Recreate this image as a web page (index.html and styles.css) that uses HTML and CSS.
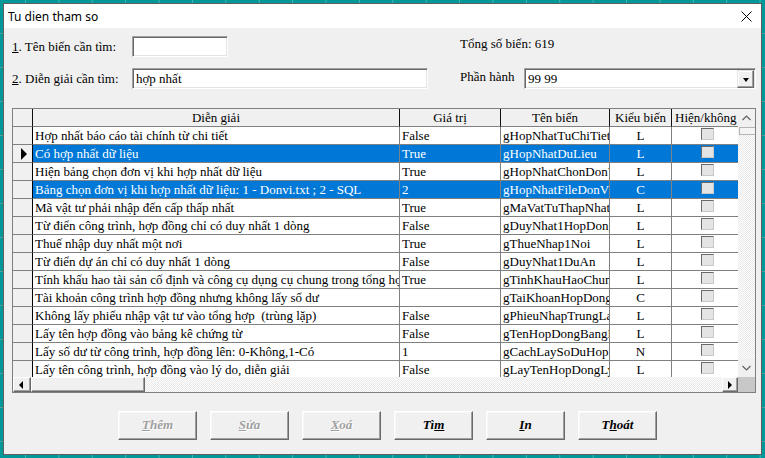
FILE: index.html
```html
<!DOCTYPE html>
<html lang="vi">
<head>
<meta charset="utf-8">
<title>Tu dien tham so</title>
<link rel="stylesheet" href="styles.css">
</head>
<body>
<div class="window">
  <div class="titlebar">
    <span class="title">Tu dien tham so</span>
    <svg class="close" width="11" height="11" viewBox="0 0 11 11"><path d="M0.5 0.5 L10.5 10.5 M10.5 0.5 L0.5 10.5" stroke="#000" stroke-width="1" fill="none"/></svg>
  </div>
  <div class="content">
    <div class="form">
      <div class="lbl"><u>1</u>. Tên biến cần tìm:</div>
      <div class="input in1"></div>
      <div class="total">Tổng số biến: 619</div>
      <div class="lbl"><u>2</u>. Diễn giải cần tìm:</div>
      <div class="input in2">hợp nhất</div>
      <div class="lbl ph">Phần hành</div>
      <div class="input combo"><span>99 99</span><span class="dd"><i class="tri-down"></i></span></div>
    </div>

    <div class="grid">
      <div class="gmain">
        <div class="cells">
          <div class="row hdr">
            <div class="c ind"></div>
            <div class="c">Diễn giải</div>
            <div class="c">Giá trị</div>
            <div class="c">Tên biến</div>
            <div class="c">Kiểu biến</div>
            <div class="c left">Hiện/không hiện</div>
          </div>
          <div class="row">
            <div class="c ind"></div><div class="c">Hợp nhất báo cáo tài chính từ chi tiết</div><div class="c">False</div><div class="c">gHopNhatTuChiTiet</div><div class="c k">L</div><div class="c h"><span class="cb"></span></div>
          </div>
          <div class="row sel">
            <div class="c ind"><i class="tri-right"></i></div><div class="c">Có hợp nhất dữ liệu</div><div class="c">True</div><div class="c">gHopNhatDuLieu</div><div class="c k">L</div><div class="c h"><span class="cb"></span></div>
          </div>
          <div class="row">
            <div class="c ind"></div><div class="c">Hiện bảng chọn đơn vị khi hợp nhất dữ liệu</div><div class="c">True</div><div class="c">gHopNhatChonDonVi</div><div class="c k">L</div><div class="c h"><span class="cb"></span></div>
          </div>
          <div class="row sel">
            <div class="c ind"></div><div class="c">Bảng chọn đơn vị khi hợp nhất dữ liệu: 1 - Donvi.txt ; 2 - SQL</div><div class="c">2</div><div class="c">gHopNhatFileDonVi</div><div class="c k">C</div><div class="c h"><span class="cb"></span></div>
          </div>
          <div class="row">
            <div class="c ind"></div><div class="c">Mã vật tư phải nhập đến cấp thấp nhất</div><div class="c">True</div><div class="c">gMaVatTuThapNhat</div><div class="c k">L</div><div class="c h"><span class="cb"></span></div>
          </div>
          <div class="row">
            <div class="c ind"></div><div class="c">Từ điển công trình, hợp đồng chỉ có duy nhất 1 dòng</div><div class="c">False</div><div class="c">gDuyNhat1HopDong</div><div class="c k">L</div><div class="c h"><span class="cb"></span></div>
          </div>
          <div class="row">
            <div class="c ind"></div><div class="c">Thuế nhập duy nhất một nơi</div><div class="c">True</div><div class="c">gThueNhap1Noi</div><div class="c k">L</div><div class="c h"><span class="cb"></span></div>
          </div>
          <div class="row">
            <div class="c ind"></div><div class="c">Từ điển dự án chỉ có duy nhất 1 dòng</div><div class="c">False</div><div class="c">gDuyNhat1DuAn</div><div class="c k">L</div><div class="c h"><span class="cb"></span></div>
          </div>
          <div class="row">
            <div class="c ind"></div><div class="c">Tính khấu hao tài sản cố định và công cụ dụng cụ chung trong tổng hợp</div><div class="c">True</div><div class="c">gTinhKhauHaoChung</div><div class="c k">L</div><div class="c h"><span class="cb"></span></div>
          </div>
          <div class="row">
            <div class="c ind"></div><div class="c">Tài khoản công trình hợp đồng nhưng không lấy số dư</div><div class="c"></div><div class="c">gTaiKhoanHopDong</div><div class="c k">C</div><div class="c h"><span class="cb"></span></div>
          </div>
          <div class="row">
            <div class="c ind"></div><div class="c">Không lấy phiếu nhập vật tư vào tổng hợp  (trùng lặp)</div><div class="c">False</div><div class="c">gPhieuNhapTrungLap</div><div class="c k">L</div><div class="c h"><span class="cb"></span></div>
          </div>
          <div class="row">
            <div class="c ind"></div><div class="c">Lấy tên hợp đồng vào bảng kê chứng từ</div><div class="c">False</div><div class="c">gTenHopDongBangKe</div><div class="c k">L</div><div class="c h"><span class="cb"></span></div>
          </div>
          <div class="row">
            <div class="c ind"></div><div class="c">Lấy số dư từ công trình, hợp đồng lên: 0-Không,1-Có</div><div class="c">1</div><div class="c">gCachLaySoDuHopDong</div><div class="c k">N</div><div class="c h"><span class="cb"></span></div>
          </div>
          <div class="row">
            <div class="c ind"></div><div class="c">Lấy tên công trình, hợp đồng vào lý do, diễn giải</div><div class="c">False</div><div class="c">gLayTenHopDongLyDo</div><div class="c k">L</div><div class="c h"><span class="cb"></span></div>
          </div>
        </div>
        <div class="vscroll">
          <div class="vend"><svg width="9" height="6" viewBox="0 0 9 6"><path d="M0.5 5 L4.5 1 L8.5 5" stroke="#606060" stroke-width="1.2" fill="none"/></svg></div>
          <div class="vthumb"></div>
          <div class="vtrack"></div>
          <div class="vend"><svg width="9" height="6" viewBox="0 0 9 6"><path d="M0.5 1 L4.5 5 L8.5 1" stroke="#606060" stroke-width="1.2" fill="none"/></svg></div>
        </div>
      </div>
      <div class="hscroll">
        <div class="raised hbtn lb"><i class="tri-left"></i></div>
        <div class="raised hthumb"></div>
        <div class="htrack"></div>
        <div class="raised hbtn rb"><i class="tri-right"></i></div>
        <div class="corner"></div>
      </div>
    </div>

    <div class="buttons">
      <div class="btn dis"><u>T</u>hêm</div>
      <div class="btn dis"><u>S</u>ửa</div>
      <div class="btn dis"><u>X</u>oá</div>
      <div class="btn">Tì<u>m</u></div>
      <div class="btn"><u>I</u>n</div>
      <div class="btn">T<u>h</u>oát</div>
    </div>
  </div>
</div>
</body>
</html>
```
FILE: styles.css
```css
* { box-sizing: border-box; }
html, body { margin: 0; padding: 0; }
body {
  width: 765px;
  height: 458px;
  overflow: hidden;
  padding: 3px 3px 0 3px;
  background-color: #009898;
  background-image:
    linear-gradient(90deg, rgba(150, 220, 220, 0.45) 1px, transparent 1px),
    linear-gradient(rgba(200, 160, 170, 0.45) 1px, transparent 1px);
  background-size: 33.4px 100%, 100% 34px;
  background-position: 25px 0, 0 33px;
}

.window {
  width: 759px;
  height: 452px;
  border: 1px solid #5e5e5e;
  background: #f0f0f0;
  display: flex;
  flex-direction: column;
}

.titlebar {
  height: 24px;
  background: #fff;
  display: flex;
  align-items: center;
  justify-content: space-between;
  padding: 0 9px 0 4px;
  font: 12px "Noto Sans", "DejaVu Sans", sans-serif;
  color: #000;
}
.close { display: block; }

.content {
  padding: 8px 0 0 8px;
  font: 13px "Liberation Serif", serif;
  color: #000;
}

.form {
  display: grid;
  grid-template-columns: 120px 296px 32px 64px 232px;
  grid-template-rows: 21px 21px;
  row-gap: 11px;
}
.lbl { align-self: center; line-height: 15px; white-space: nowrap; }
.lbl.ph { grid-column: 4; align-self: start; padding-top: 1px; }
.total { grid-column: 4 / 6; align-self: start; line-height: 15px; }

.input {
  height: 21px;
  background: #fff;
  border: 1px solid;
  border-color: #a0a0a0 #fff #fff #a0a0a0;
  box-shadow: inset 1px 1px #696969, inset -1px -1px #e3e3e3;
  padding: 2px 0 0 3px;
  line-height: 15px;
  white-space: nowrap;
}
.in1 { width: 96px; }
.in2 { width: 296px; }
.combo {
  grid-column: 5;
  width: 232px;
  display: flex;
  justify-content: space-between;
  padding-right: 1px;
}
.dd {
  width: 17px;
  height: 18px;
  margin-top: -1px;
  background: #f0f0f0;
  border: 1px solid;
  border-color: #e3e3e3 #696969 #696969 #e3e3e3;
  box-shadow: inset -1px -1px #a0a0a0, inset 1px 1px #fff;
  display: flex;
  align-items: center;
  justify-content: center;
}
.tri-down {
  display: block;
  width: 0; height: 0;
  border-top: 4px solid #000;
  border-left: 3.5px solid transparent;
  border-right: 3.5px solid transparent;
  margin-top: 1px;
}

/* data grid */
.grid {
  margin-top: 19px;
  width: 744px;
  border: 1px solid #7f7f7f;
  background: #fff;
}
.gmain { display: flex; height: 268px; }
.cells { width: 725px; height: 268px; overflow: hidden; background: #fff; }
.row {
  display: grid;
  grid-template-columns: 20px 367px 101px 109px 62px 66px;
  height: 18px;
}
.c {
  border-right: 1px solid #808080;
  border-bottom: 1px solid #808080;
  overflow: hidden;
  white-space: pre;
  padding: 0 2px;
  line-height: 17px;
}
.c:last-child { border-right: none; }
.c.ind {
  background: #f0f0f0;
  border-right-color: #000;
  padding: 3px 0 0 8px;
}
.c.k { text-align: center; }
.c.h { padding: 0; }
.hdr .c {
  background: #f0f0f0;
  text-align: center;
  border-right-color: #101010;
}
.hdr .c.left { text-align: left; padding-left: 3px; }
.sel .c:not(.ind) { background: #0078d7; color: #fff; }

.cb {
  display: block;
  width: 13px;
  height: 12px;
  margin: 1px 0 0 29px;
  background: #e4e4e4;
  border: 1px solid;
  border-color: #6a6a6a #c8c8c8 #c8c8c8 #6a6a6a;
}

.tri-right {
  display: block;
  width: 0; height: 0;
  border-left: 6px solid #000;
  border-top: 6px solid transparent;
  border-bottom: 6px solid transparent;
}
.tri-left {
  display: block;
  width: 0; height: 0;
  border-right: 4px solid #000;
  border-top: 4px solid transparent;
  border-bottom: 4px solid transparent;
}

.vscroll {
  width: 17px;
  display: flex;
  flex-direction: column;
  background: #f0f0f0;
}
.vend {
  height: 18px;
  display: flex;
  align-items: center;
  justify-content: center;
  background: #f0f0f0;
}
.vthumb {
  height: 8px;
  margin-left: 1px;
  background: #f4f4f4;
  border: 1px solid #b4b4b4;
  border-right: none;
}
.vtrack, .htrack {
  flex: 1;
  background-color: #fff;
  background-image: repeating-conic-gradient(#e8e8e8 0 25%, #fff 0 50%);
  background-size: 2px 2px;
}

.hscroll { display: flex; height: 15px; }
.raised {
  background: #f0f0f0;
  border: 1px solid;
  border-color: #fff #696969 #696969 #fff;
  box-shadow: inset -1px -1px #a0a0a0;
}
.hbtn {
  display: flex;
  align-items: center;
  justify-content: center;
}
.hbtn.lb { width: 18px; padding-right: 3px; }
.hbtn.rb { width: 16px; }
.hbtn.rb .tri-right {
  border-left-width: 4px;
  border-top-width: 4px;
  border-bottom-width: 4px;
}
.hthumb { width: 114px; }
.corner { width: 17px; background: #c8c8c8; }

/* buttons */
.buttons {
  display: flex;
  gap: 13px;
  margin-top: 18px;
  padding-left: 106px;
}
.btn {
  width: 79px;
  height: 29px;
  background: #f0f0f0;
  border: 1px solid;
  border-color: #fff #696969 #696969 #fff;
  box-shadow: inset -1px -1px #a0a0a0, inset 1px 1px #f8f8f8;
  font: italic bold 13px "Liberation Serif", serif;
  color: #000;
  display: flex;
  align-items: center;
  justify-content: center;
  padding-bottom: 1px;
}
.btn.dis { color: #a0a0a0; text-shadow: 1px 1px #fff; }
```
